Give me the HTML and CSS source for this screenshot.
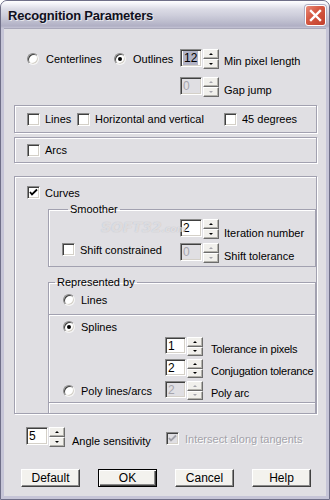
FILE: index.html
```html
<!DOCTYPE html>
<html>
<head>
<meta charset="utf-8">
<link rel="stylesheet" href="styles.css">
</head>
<body>
<div class="window">
  <div class="titlebar">
    <span class="title">Recognition Parameters</span>
    <span class="close"><svg width="13" height="13" viewBox="0 0 13 13"><path d="M2 2 L11 11 M11 2 L2 11" stroke="#fff" stroke-width="2.4" stroke-linecap="square"/></svg></span>
  </div>
  <div class="client">
    <div class="row r1">
      <label class="opt w-center"><span class="radio"></span>Centerlines</label>
      <label class="opt w-outline"><span class="radio on"></span>Outlines</label>
      <div class="spin"><span class="edit"><span class="sel">12</span></span><span class="btns"><span class="sb"><i class="up"></i></span><span class="sb"><i class="dn"></i></span></span></div>
      <span class="lbl l1">Min pixel length</span>
    </div>
    <div class="row r2">
      <div class="spin dis"><span class="edit">0</span><span class="btns"><span class="sb"><i class="up"></i></span><span class="sb"><i class="dn"></i></span></span></div>
      <span class="lbl l2">Gap jump</span>
    </div>

    <div class="frame lines">
      <label class="opt c1"><span class="check"></span>Lines</label>
      <label class="opt c2"><span class="check"></span>Horizontal and vertical</label>
      <label class="opt"><span class="check"></span>45 degrees</label>
    </div>

    <div class="frame arcs">
      <label class="opt"><span class="check"></span>Arcs</label>
    </div>

    <div class="frame curves">
      <label class="opt curves-opt"><span class="check on"><svg width="9" height="9" viewBox="0 0 9 9"><path d="M1 4 L3 6.5 L8 1.5" stroke="#000" stroke-width="1.8" fill="none"/></svg></span>Curves</label>

      <fieldset class="grp smoother">
        <legend>Smoother</legend>
        <span class="wm">SOFT32<small>.com</small></span>
        <div class="sgrid">
          <span></span>
          <div class="sc">
            <div class="spin"><span class="edit">2</span><span class="btns"><span class="sb"><i class="up"></i></span><span class="sb"><i class="dn"></i></span></span></div>
            <span class="lbl l3">Iteration number</span>
          </div>
          <label class="opt shift"><span class="check"></span>Shift constrained</label>
          <div class="sc">
            <div class="spin dis"><span class="edit">0</span><span class="btns"><span class="sb"><i class="up"></i></span><span class="sb"><i class="dn"></i></span></span></div>
            <span class="lbl l4">Shift tolerance</span>
          </div>
        </div>
      </fieldset>

      <fieldset class="grp repr">
        <legend>Represented by</legend>
        <label class="opt ropt"><span class="radio"></span>Lines</label>
        <div class="inner">
          <label class="opt ropt spl"><span class="radio on"></span>Splines</label>
          <div class="rgrid">
            <span></span>
            <div class="rc">
              <div class="spin sm"><span class="edit">1</span><span class="btns"><span class="sb"><i class="up"></i></span><span class="sb"><i class="dn"></i></span></span></div>
              <span class="lbl">Tolerance in pixels</span>
            </div>
            <span></span>
            <div class="rc">
              <div class="spin sm"><span class="edit">2</span><span class="btns"><span class="sb"><i class="up"></i></span><span class="sb"><i class="dn"></i></span></span></div>
              <span class="lbl">Conjugation tolerance</span>
            </div>
            <label class="opt ropt"><span class="radio"></span>Poly lines/arcs</label>
            <div class="rc">
              <div class="spin sm dis"><span class="edit">2</span><span class="btns"><span class="sb"><i class="up"></i></span><span class="sb"><i class="dn"></i></span></span></div>
              <span class="lbl">Poly arc</span>
            </div>
          </div>
        </div>
      </fieldset>
    </div>

    <div class="row angle">
      <div class="spin"><span class="edit">5</span><span class="btns"><span class="sb"><i class="up"></i></span><span class="sb"><i class="dn"></i></span></span></div>
      <span class="lbl l5">Angle sensitivity</span>
      <label class="opt disabled"><span class="check on dis"><svg width="9" height="9" viewBox="0 0 9 9"><path d="M1 4 L3 6.5 L8 1.5" stroke="#a0a0a8" stroke-width="1.8" fill="none"/></svg></span>Intersect along tangents</label>
    </div>

    <div class="buttons">
      <span class="btn">Default</span>
      <span class="btn def">OK</span>
      <span class="btn">Cancel</span>
      <span class="btn">Help</span>
    </div>
  </div>
</div>
</body>
</html>
```
FILE: styles.css
```css
html, body {
  margin: 0;
  padding: 0;
  background: #ffffff;
}
body {
  font-family: "Liberation Sans", Arial, sans-serif;
  font-size: 11px;
  color: #000;
}
.window {
  width: 330px;
  height: 500px;
  box-sizing: border-box;
  border: 1px solid #6f6f88;
  border-radius: 7px 7px 0 0;
  background: #c6c5d7;
  display: flex;
  flex-direction: column;
  overflow: hidden;
}
.titlebar {
  height: 27px;
  flex: none;
  display: flex;
  align-items: center;
  justify-content: space-between;
  padding: 0 3px 0 7px;
  background: linear-gradient(#ffffff 0px, #f3f3f8 3px, #dcdce6 8px, #cfcfdc 14px, #bcbccd 21px, #b0afc4 25px, #c4c3d4 27px);
}
.title {
  font-weight: bold;
  font-size: 13px;
  letter-spacing: -0.2px;
  color: #101020;
  text-shadow: 1px 1px 0 rgba(255,255,255,0.6);
  margin-top: 1px;
}
.close {
  width: 19px;
  height: 19px;
  border: 1px solid #fff;
  border-radius: 3px;
  background: linear-gradient(135deg, #e88a78 0%, #d65a44 40%, #c23f2c 100%);
  display: flex;
  align-items: center;
  justify-content: center;
  box-shadow: 0 0 0 1px #b0afc4;
  margin-top: 2px;
}
.client {
  flex: 1;
  margin: 0 3px 3px 3px;
  background: #e0dfe3;
  padding: 0 9px 0 10px;
  border-top: 1px solid #a9a8ba;
}

/* generic */
.row {
  display: flex;
  align-items: flex-start;
}
.opt {
  display: flex;
  align-items: center;
  gap: 5px;
  white-space: nowrap;
  height: 20px;
}
.lbl {
  white-space: nowrap;
  line-height: 13px;
}
.radio {
  width: 10px;
  height: 10px;
  border-radius: 50%;
  background: #fff;
  border: 1px solid;
  border-color: #8a8a8a #f4f4f4 #f4f4f4 #8a8a8a;
  box-shadow: inset 1px 1px 0 #404040, inset -1px -1px 0 #d4d0c8;
  display: flex;
  align-items: center;
  justify-content: center;
  flex: none;
}
.radio.on::after {
  content: "";
  width: 4px;
  height: 4px;
  border-radius: 50%;
  background: #000;
}
.check {
  width: 11px;
  height: 11px;
  background: #fff;
  border: 1px solid;
  border-color: #8a8a8a #ffffff #ffffff #8a8a8a;
  box-shadow: inset 1px 1px 0 #404040, inset -1px -1px 0 #d4d0c8;
  display: flex;
  align-items: center;
  justify-content: center;
  flex: none;
}
.check.dis {
  background: #e0dfe3;
}
.disabled {
  color: #a3a2aa;
  text-shadow: 1px 1px 0 #fff;
}

/* spinner */
.spin {
  display: flex;
  height: 20px;
  flex: none;
}
.edit {
  width: 18px;
  height: 16px;
  background: #fff;
  border: 1px solid;
  border-color: #8a8a8a #ffffff #ffffff #8a8a8a;
  box-shadow: inset 1px 1px 0 #404040, inset -1px -1px 0 #d4d0c8;
  padding-left: 2px;
  font-size: 12px;
  line-height: 17px;
}
.sel {
  background: #b2b3c6;
  padding: 0 1px;
}
.btns {
  width: 16px;
  display: flex;
  flex-direction: column;
  margin-left: 1px;
}
.sb {
  flex: 1;
  box-sizing: border-box;
  background: #f1f0ec;
  border: 1px solid;
  border-color: #ffffff #6c6c6c #6c6c6c #ffffff;
  box-shadow: inset -1px -1px 0 #b4b3ad;
  display: flex;
  align-items: center;
  justify-content: center;
}
.sb i {
  width: 0;
  height: 0;
  border-left: 2px solid transparent;
  border-right: 2px solid transparent;
}
.sb i.up { border-bottom: 2px solid #000; }
.sb i.dn { border-top: 2px solid #000; }
.dis .edit {
  background: #e0dfe3;
  color: #a6a5ad;
}
.dis .sb i.up { border-bottom-color: #a6a5ad; }
.dis .sb i.dn { border-top-color: #a6a5ad; }
.spin.sm {
  height: 19px;
}
.spin.sm .edit {
  width: 17px;
  height: 15px;
  line-height: 16px;
}

/* top rows */
.r1 {
  margin-top: 20px;
  margin-left: 13px;
}
.w-center { width: 87px; }
.w-outline { width: 66px; }
.r1 .opt { gap: 7px; }
.l1 { margin-left: 5px; padding-top: 6px; }
.r2 {
  margin-top: 8px;
  margin-left: 166px;
}
.l2 { margin-left: 5px; padding-top: 7px; }

/* frames */
.frame {
  border: 1px solid #a2a1b0;
  box-shadow: inset 1px 1px 0 #fff, 1px 1px 0 #fff;
}
.lines {
  margin-top: 8px;
  box-sizing: border-box;
  height: 28px;
  display: flex;
  align-items: center;
  padding-left: 12px;
}
.lines .c1 { width: 50px; }
.lines .c2 { width: 147px; }
.arcs {
  margin-top: 4px;
  height: 26px;
  box-sizing: border-box;
  display: flex;
  align-items: center;
  padding-left: 12px;
}
.curves {
  margin-top: 13px;
  padding: 7px 0 0 12px;
  height: 238px;
  box-sizing: border-box;
  overflow: hidden;
}
.curves-opt {
  height: 17px;
}

/* group boxes */
.grp {
  margin: 0;
  border: 1px solid #a2a1b0;
  box-shadow: inset 1px 1px 0 #fff;
  padding: 0;
  position: relative;
}
.grp legend {
  margin-left: 6px;
  padding: 0 2px;
  line-height: 13px;
}
.smoother {
  margin: 2px 0 0 21px;
  padding: 3px 0 3px 13px;
}
.sgrid {
  display: grid;
  grid-template-columns: 118px auto;
  row-gap: 3px;
}
.sc {
  display: flex;
  align-items: flex-start;
}
.l3 { margin-left: 5px; padding-top: 8px; }
.l4 { margin-left: 5px; padding-top: 7px; }
.shift {
  height: 13px;
  align-self: start;
}
.wm {
  position: absolute;
  left: 52px;
  top: 5px;
  font-family: "DejaVu Sans", sans-serif;
  font-weight: bold;
  font-style: italic;
  font-size: 14px;
  line-height: 13px;
  color: rgba(255,255,255,0.55);
  text-shadow: 0 0 1px rgba(120,120,130,0.45);
}
.wm small {
  font-size: 9px;
}
.repr {
  margin: 9px 0 0 21px;
  padding: 0;
  height: 170px;
  box-sizing: border-box;
}
.ropt {
  margin-left: 14px;
  gap: 6px;
}
.repr > .ropt {
  margin-top: 1px;
}
.inner {
  margin-top: 4px;
  border-top: 1px solid #a2a1b0;
  border-bottom: 1px solid #a2a1b0;
  box-shadow: inset 0 1px 0 #fff, 0 1px 0 #fff;
  padding: 2px 0 2px 0;
}
.rgrid {
  display: grid;
  grid-template-columns: 116px auto;
  row-gap: 3px;
}
.rgrid .ropt {
  height: 19px;
}
.rc {
  display: flex;
  align-items: flex-start;
}
.rc .lbl {
  margin-left: 8px;
  padding-top: 6px;
  letter-spacing: -0.22px;
}

/* angle */
.angle {
  margin-top: 13px;
  margin-left: 12px;
}
.l5 { margin-left: 7px; padding-top: 8px; width: 94px; }
.angle .opt {
  height: 13px;
  margin-top: 5px;
  gap: 6px;
}

/* buttons */
.buttons {
  display: flex;
  gap: 18px;
  margin-top: 21px;
  margin-left: 7px;
}
.btn {
  width: 59px;
  height: 18px;
  box-sizing: border-box;
  background: #f3f2ee;
  border: 1px solid;
  border-color: #ffffff #404040 #404040 #ffffff;
  box-shadow: inset -1px -1px 0 #8a8a8a;
  display: flex;
  align-items: center;
  justify-content: center;
  font-size: 12px;
}
.btn.def {
  border: 1px solid #000;
  box-shadow: inset 1px 1px 0 #fff, inset -1px -1px 0 #404040, inset -2px -2px 0 #8a8a8a;
}
```
